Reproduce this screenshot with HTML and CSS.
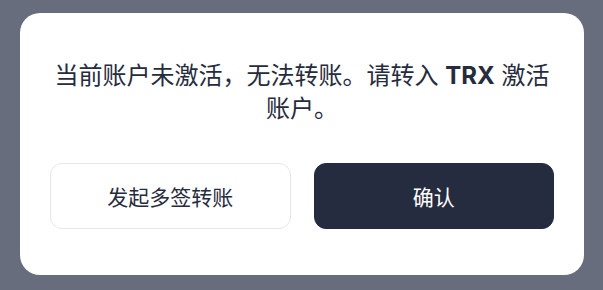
FILE: index.html
```html
<!DOCTYPE html>
<html lang="zh-CN">
<head>
<meta charset="utf-8">
<title>提示</title>
<link rel="stylesheet" href="styles.css">
</head>
<body>
<div class="overlay">
  <div class="dialog">
    <p class="message">当前账户未激活，无法转账。请转入 <strong class="token">TRX</strong> 激活账户。</p>
    <div class="actions">
      <button class="btn btn-secondary">发起多签转账</button>
      <button class="btn btn-primary">确认</button>
    </div>
  </div>
</div>
</body>
</html>
```

FILE: styles.css
```css
* {
  box-sizing: border-box;
}

html, body {
  margin: 0;
  padding: 0;
  width: 603px;
  height: 290px;
  overflow: hidden;
  background: #686d7d;
}

.overlay {
  padding: 13px 19px 15px 20px;
}

.dialog {
  width: 564px;
  height: 262px;
  background: #ffffff;
  border-radius: 20px;
  padding: 46px 30px 46px 30px;
  display: flex;
  flex-direction: column;
  justify-content: space-between;
  font-family: "Inter", "Noto Sans CJK SC", sans-serif;
  color: #262b3d;
}

.message {
  margin: 0;
  font-size: 24px;
  line-height: 33px;
  text-align: center;
  font-weight: 400;
}

.token {
  font-weight: 700;
}

.actions {
  display: flex;
  gap: 23px;
}

.btn {
  flex: 1;
  height: 66px;
  border-radius: 12px;
  font-family: "Inter", "Noto Sans CJK SC", sans-serif;
  font-size: 21px;
  font-weight: 400;
  cursor: pointer;
  padding: 0;
}

.btn-secondary {
  background: #ffffff;
  border: 1px solid #e6e7ea;
  color: #262b3d;
}

.btn-primary {
  background: #262c40;
  border: 1px solid #262c40;
  color: #ffffff;
}
```
